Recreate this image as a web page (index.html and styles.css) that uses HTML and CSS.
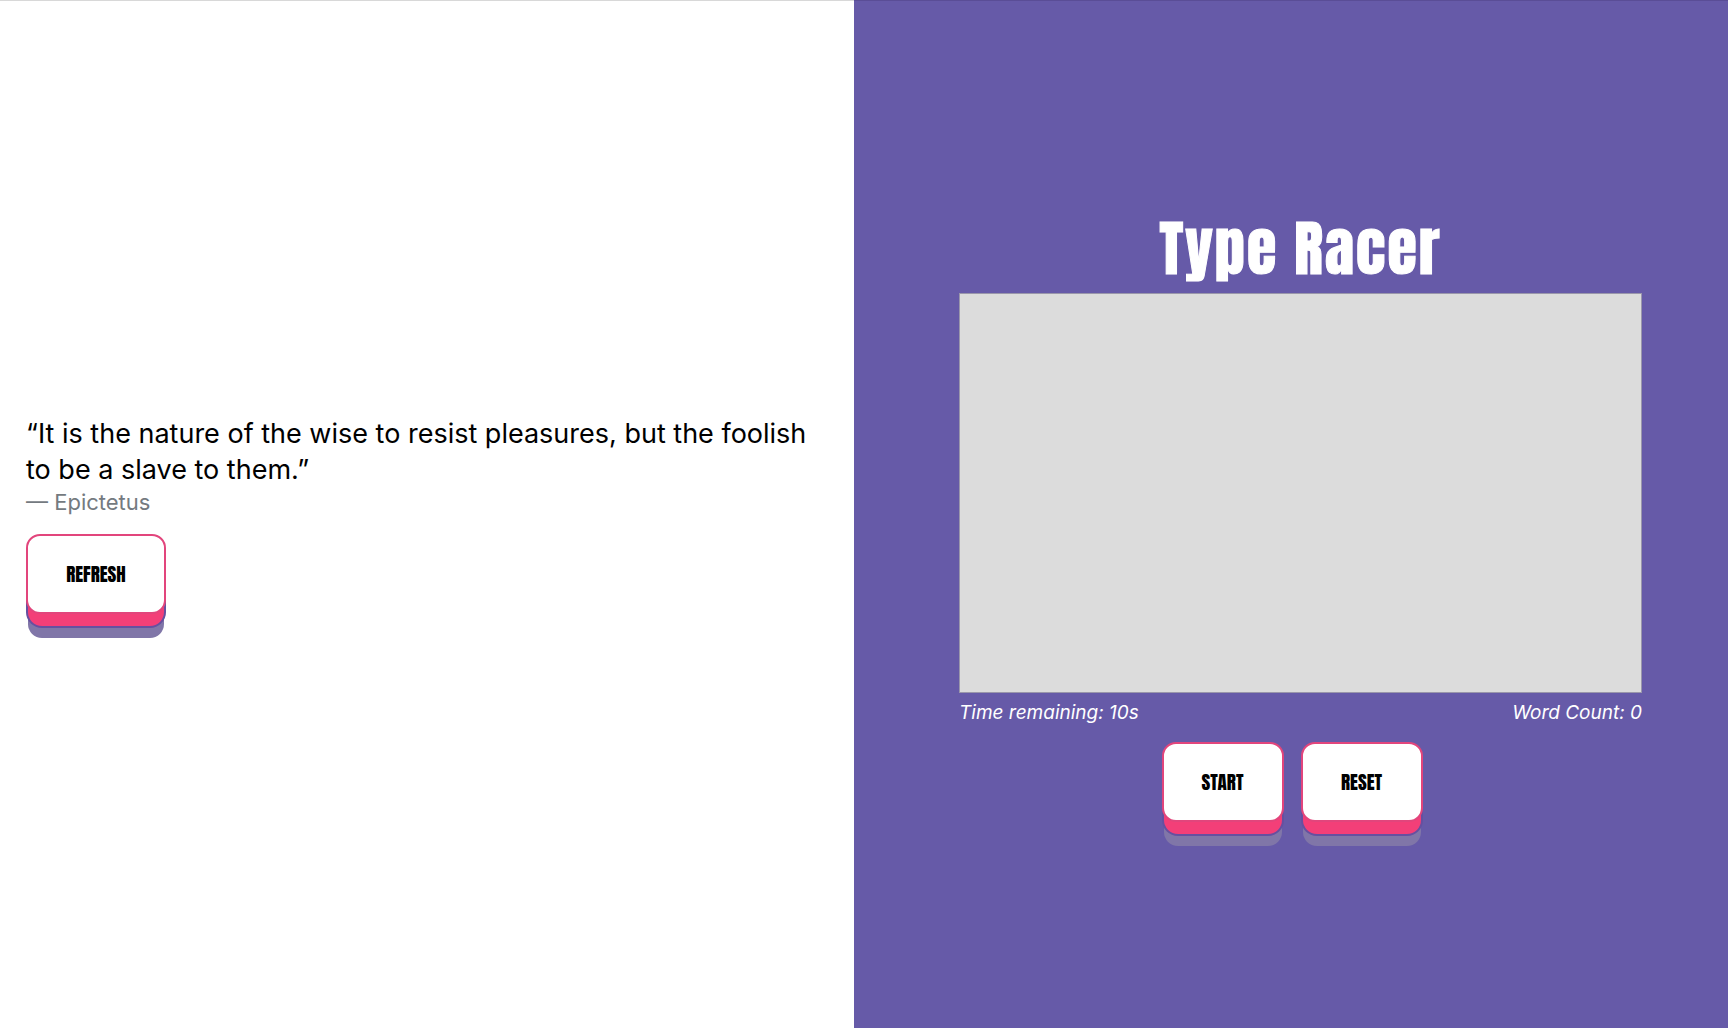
FILE: index.html
```html
<!DOCTYPE html>
<html lang="en">
<head>
<meta charset="utf-8">
<meta name="viewport" content="width=device-width, initial-scale=1">
<title>Type Racer</title>
<link rel="stylesheet" href="styles.css">
</head>
<body>
<main class="app">
  <section class="quote-panel">
    <figure class="quote">
      <blockquote class="quote-text">“It is the nature of the wise to resist pleasures, but the foolish to be a slave to them.”</blockquote>
      <figcaption class="quote-author">— Epictetus</figcaption>
    </figure>
    <button class="btn btn-wide" type="button">Refresh</button>
  </section>
  <section class="game-panel">
    <h1 class="title"><label for="typing-box">Type Racer</label></h1>
    <textarea class="typing-box" id="typing-box" disabled></textarea>
    <div class="stats">
      <em>Time remaining: 10s</em>
      <em>Word Count: 0</em>
    </div>
    <div class="actions">
      <button class="btn" type="button">Start</button>
      <button class="btn" type="button">Reset</button>
    </div>
  </section>
</main>
</body>
</html>
```
FILE: styles.css
```css
* {
  box-sizing: border-box;
}

body {
  margin: 0;
  background: #fff;
  color: #000;
  font-family: Inter, sans-serif;
}

.app {
  display: grid;
  grid-template-columns: 854fr 874fr;
  min-height: 100vh;
}

.quote-panel,
.game-panel {
  display: flex;
  flex-direction: column;
  justify-content: center;
  border-top: 1px solid #d8d8d8;
}

.quote-panel {
  align-items: flex-start;
  padding: 0 26px;
}

.quote {
  margin: 0 0 18px;
}

.quote-text {
  margin: 0;
  font-size: 27px;
  line-height: 36px;
}

.quote-author {
  color: #747a80;
  font-size: 22px;
  line-height: 28px;
}

.game-panel {
  padding: 0 86px 0 105px;
  border-top-color: #5a4d96;
  background: #665aa8;
  color: #fff;
}

.title {
  margin: 0;
  padding-bottom: 2px;
  font-family: Anton, Impact, sans-serif;
  font-size: 60px;
  font-weight: 400;
  letter-spacing: 2px;
  line-height: 84px;
  text-align: center;
  -webkit-text-stroke: 1px #fff;
}

.typing-box {
  display: block;
  width: 100%;
  height: 400px;
  padding: 8px;
  border: 1px solid #9a97ab;
  border-radius: 0;
  background: #dcdcdc;
  resize: none;
}

.stats {
  display: flex;
  justify-content: space-between;
  margin: 4px 0 13px;
  font-size: 19px;
  line-height: 32px;
}

.actions {
  display: flex;
  justify-content: center;
}

.btn {
  position: relative;
  width: 122px;
  height: 80px;
  margin-right: 17px;
  padding: 0;
  border: 2px solid #e2457c;
  border-radius: 14px;
  background: #fff;
  color: #000;
  font-family: Anton, Impact, sans-serif;
  font-size: 19px;
  font-weight: 600;
  text-transform: uppercase;
  transform-style: preserve-3d;
}

.btn-wide {
  width: 140px;
}

/* coloured base under the raised face */
.btn::before {
  position: absolute;
  inset: 0;
  border-radius: 14px;
  background: #f33f78;
  box-shadow: 0 0 0 2px #6650a0, 0 12px 0 0 #8076a8;
  content: "";
  transform: translate3d(0, 14px, -16px);
}
```
